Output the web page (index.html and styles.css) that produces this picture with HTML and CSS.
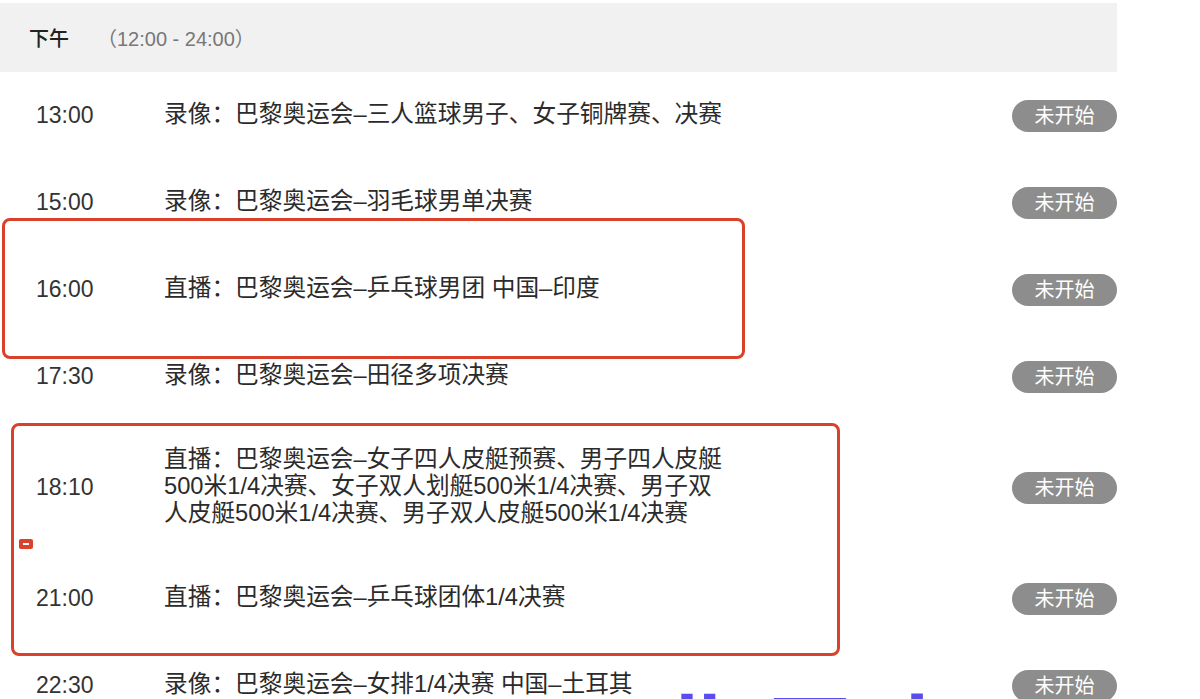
FILE: index.html
```html
<!DOCTYPE html>
<html lang="zh-CN">
<head>
    <meta charset="UTF-8">
    <meta name="viewport" content="width=device-width, initial-scale=1.0">
    <title>节目单 - 下午</title>
    <link rel="stylesheet" href="styles.css">
</head>
<body>
    <div class="page">
        <div class="schedule">
            <div class="period">
                <span class="period-name">下午</span>
                <span class="period-range">（12:00 - 24:00）</span>
            </div>
            <div class="row">
                <span class="time">13:00</span>
                <span class="title">录像：巴黎奥运会–三人篮球男子、女子铜牌赛、决赛</span>
                <span class="status">未开始</span>
            </div>
            <div class="row">
                <span class="time">15:00</span>
                <span class="title">录像：巴黎奥运会–羽毛球男单决赛</span>
                <span class="status">未开始</span>
            </div>
            <div class="row">
                <span class="time">16:00</span>
                <span class="title">直播：巴黎奥运会–乒乓球男团 中国–印度</span>
                <span class="status">未开始</span>
            </div>
            <div class="row">
                <span class="time">17:30</span>
                <span class="title">录像：巴黎奥运会–田径多项决赛</span>
                <span class="status">未开始</span>
            </div>
            <div class="row">
                <span class="time">18:10</span>
                <span class="title">直播：巴黎奥运会–女子四人皮艇预赛、男子四人皮艇500米1/4决赛、女子双人划艇500米1/4决赛、男子双人皮艇500米1/4决赛、男子双人皮艇500米1/4决赛</span>
                <span class="status">未开始</span>
            </div>
            <div class="row">
                <span class="time">21:00</span>
                <span class="title">直播：巴黎奥运会–乒乓球团体1/4决赛</span>
                <span class="status">未开始</span>
            </div>
            <div class="row">
                <span class="time">22:30</span>
                <span class="title">录像：巴黎奥运会–女排1/4决赛 中国–土耳其</span>
                <span class="status">未开始</span>
            </div>
        </div>

        <!-- annotations drawn over the screenshot -->
        <div class="mark mark-one"></div>
        <div class="mark mark-two"></div>
        <div class="mark-tag"></div>
        <div class="watermark">北平上</div>
    </div>
</body>
</html>
```

FILE: styles.css
```css
body {
    margin: 0;
    background-color: white;
    font-family: "Liberation Sans", "Noto Sans CJK SC", sans-serif;
    color: #333;
    overflow: hidden;
}
.page {
    position: relative;
    width: 1200px;
    height: 699px;
    overflow: hidden;
}
.schedule {
    width: 1117px;
    padding-top: 3px;
}
.period {
    display: flex;
    align-items: center;
    height: 69px;
    padding-left: 29px;
    background-color: #f1f1f1;
}
.period-name {
    font-size: 20px;
    font-weight: 500;
    color: #222;
}
.period-range {
    margin-left: 28px;
    font-size: 20px;
    color: #777;
}
.row {
    display: flex;
    align-items: center;
    min-height: 87px;
    padding: 26px 0;
    box-sizing: border-box;
}
.time {
    width: 128px;
    padding-left: 36px;
    font-size: 23px;
    color: #333;
    flex-shrink: 0;
}
.title {
    width: 562px;
    font-size: 23.7px;
    line-height: 27px;
    color: #2b2b2b;
    padding-bottom: 2px;
}
.status {
    margin-left: auto;
    width: 105px;
    height: 32px;
    line-height: 32px;
    border-radius: 16px;
    background-color: #8d8d8d;
    color: white;
    font-size: 20px;
    text-align: center;
}
.mark {
    position: absolute;
    border: 3px solid #d9412a;
    border-radius: 8px;
    box-sizing: border-box;
}
.mark-one {
    left: 2px;
    top: 218px;
    width: 743px;
    height: 141px;
}
.mark-two {
    left: 11px;
    top: 423px;
    width: 829px;
    height: 233px;
}
.mark-tag {
    position: absolute;
    left: 19px;
    top: 539px;
    width: 14px;
    height: 10px;
    border-radius: 2px;
    background-color: #d9412a;
}
.mark-tag::after {
    content: "";
    position: absolute;
    left: 4px;
    top: 4px;
    width: 6px;
    height: 2px;
    background-color: white;
}
.watermark {
    position: absolute;
    left: 655px;
    top: 693px;
    font-size: 90px;
    font-weight: bold;
    color: #5b4cf0;
    letter-spacing: 20px;
    line-height: 1;
}
```
